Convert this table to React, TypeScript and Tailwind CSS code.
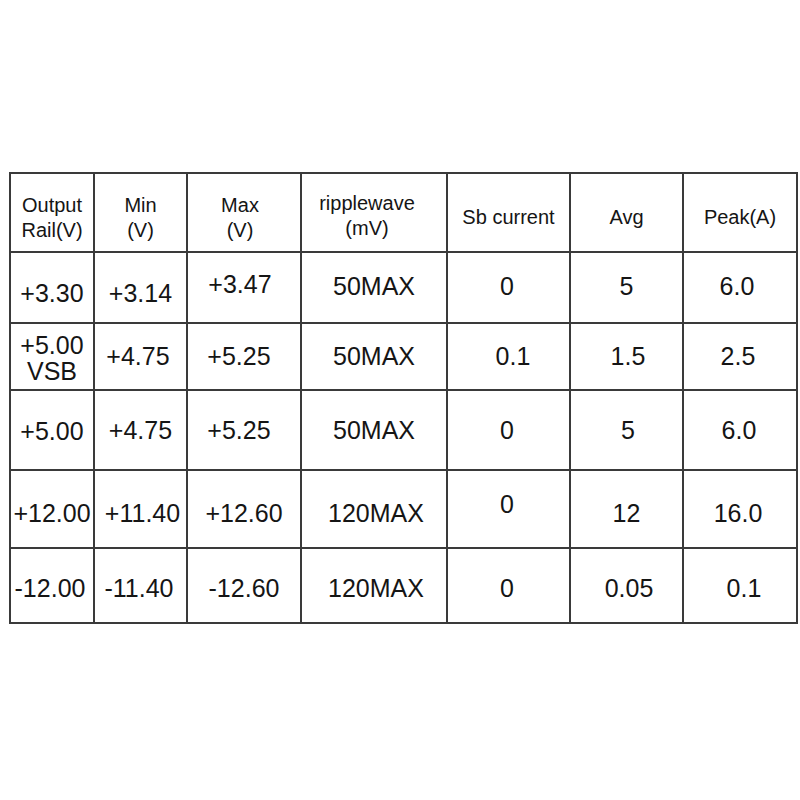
import React from "react";

type Cell = { t: React.ReactNode; c?: string };

const header: Cell[] = [
  { t: <>Output<br />Rail(V)</>, c: "pt-[10px]" },
  { t: <>Min<br />(V)</>, c: "pt-[10px]" },
  { t: <>Max<br />(V)</>, c: "pt-[10px] pr-[8px]" },
  { t: <>ripplewave<br />(mV)</>, c: "pt-[6px] pr-[14px]" },
  { t: "Sb current", c: "pt-[9px]" },
  { t: "Avg", c: "pt-[9px]" },
  { t: "Peak(A)", c: "pt-[9px]" },
];

const rows: Cell[][] = [
  [
    { t: "+3.30", c: "pt-[11px]" },
    { t: "+3.14", c: "pt-[11px]" },
    { t: "+3.47", c: "pb-[6px] pr-[8px]" },
    { t: "50MAX", c: "pb-[3px]" },
    { t: "0", c: "pb-[3px] pr-[3px]" },
    { t: "5", c: "pb-[3px]" },
    { t: "6.0", c: "pb-[3px] pr-[6px]" },
  ],
  [
    { t: <>+5.00<br />VSB</>, c: "pt-[3px] leading-[26px]" },
    { t: "+4.75", c: "pr-[5px]" },
    { t: "+5.25", c: "pr-[10px]" },
    { t: "50MAX" },
    { t: "0.1", c: "pl-[9px]" },
    { t: "1.5", c: "pl-[3px]" },
    { t: "2.5", c: "pr-[4px]" },
  ],
  [
    { t: "+5.00", c: "pt-[2px]" },
    { t: "+4.75" },
    { t: "+5.25", c: "pr-[10px]" },
    { t: "50MAX" },
    { t: "0", c: "pr-[3px]" },
    { t: "5", c: "pl-[3px]" },
    { t: "6.0", c: "pr-[2px]" },
  ],
  [
    { t: "+12.00", c: "pt-[8px]" },
    { t: "+11.40", c: "pt-[8px] pl-[4px]" },
    { t: "+12.60", c: "pt-[8px]" },
    { t: "120MAX", c: "pt-[8px] pl-[4px]" },
    { t: "0", c: "pb-[10px] pr-[3px]" },
    { t: "12", c: "pt-[8px]" },
    { t: "16.0", c: "pt-[8px] pr-[4px]" },
  ],
  [
    { t: "-12.00", c: "pt-[5px] pr-[4px]" },
    { t: "-11.40", c: "pt-[5px] pr-[3px]" },
    { t: "-12.60", c: "pt-[5px]" },
    { t: "120MAX", c: "pt-[5px] pl-[4px]" },
    { t: "0", c: "pt-[5px] pr-[3px]" },
    { t: "0.05", c: "pt-[5px] pl-[5px]" },
    { t: "0.1", c: "pt-[5px] pl-[8px]" },
  ],
];

export default function App() {
  return (
    <div className="w-[800px] h-[800px] bg-white font-['Liberation_Sans',Arial,sans-serif] text-[#151515]">
      <div className="pt-[172px] pl-[9px]">
        <div className="grid w-fit grid-cols-[82px_91px_112px_144px_121px_111px_112px] grid-rows-[77px_69px_65px_78px_76px_73px] gap-[2px] bg-[#3a3a3a] p-[2px]">
          {header.map((cell, i) => (
            <div
              key={"h" + i}
              className={"flex items-center justify-center bg-white text-center text-[20px] leading-[25px] " + (cell.c ?? "")}
            >
              <div>{cell.t}</div>
            </div>
          ))}
          {rows.map((row, r) =>
            row.map((cell, i) => (
              <div
                key={r + "-" + i}
                className={"flex items-center justify-center bg-white text-center text-[25px] leading-[25px] " + (cell.c ?? "")}
              >
                <div>{cell.t}</div>
              </div>
            ))
          )}
        </div>
      </div>
    </div>
  );
}
